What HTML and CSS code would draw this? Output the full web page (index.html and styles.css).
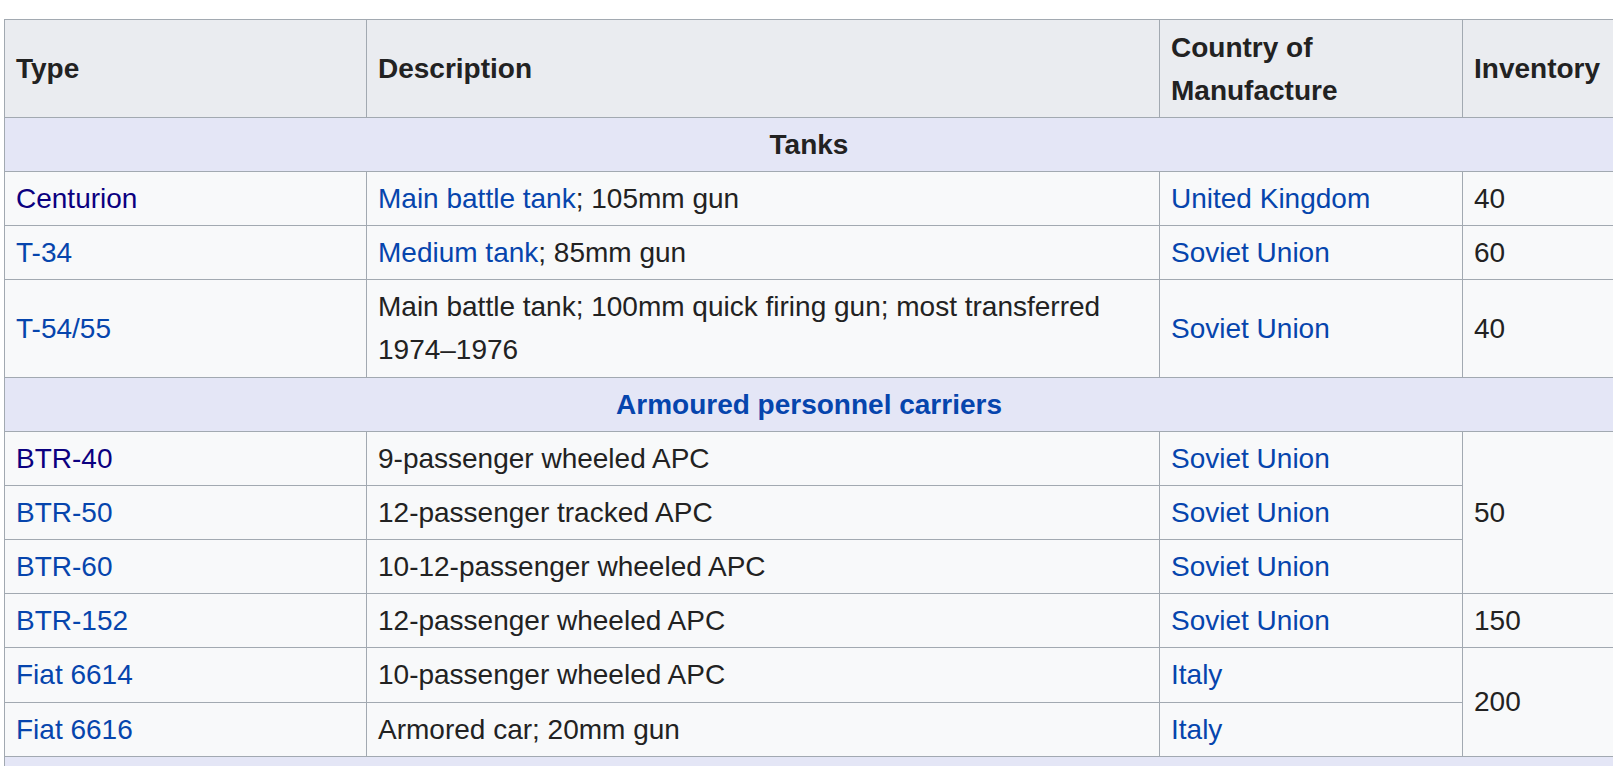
FILE: index.html
```html
<!DOCTYPE html>
<html lang="en">
<head>
<meta charset="utf-8">
<title>Armoured vehicles</title>
<link rel="stylesheet" href="styles.css">
</head>
<body>
<table class="wikitable">
  <colgroup>
    <col class="c-type">
    <col class="c-desc">
    <col class="c-country">
    <col class="c-inv">
  </colgroup>
  <thead>
    <tr>
      <th>Type</th>
      <th>Description</th>
      <th>Country of Manufacture</th>
      <th>Inventory</th>
    </tr>
  </thead>
  <tbody>
    <tr class="section"><th colspan="4">Tanks</th></tr>
    <tr>
      <td><a class="visited" href="#">Centurion</a></td>
      <td><a href="#">Main battle tank</a>; 105mm gun</td>
      <td><a href="#">United Kingdom</a></td>
      <td>40</td>
    </tr>
    <tr>
      <td><a href="#">T-34</a></td>
      <td><a href="#">Medium tank</a>; 85mm gun</td>
      <td><a href="#">Soviet Union</a></td>
      <td>60</td>
    </tr>
    <tr>
      <td><a href="#">T-54/55</a></td>
      <td>Main battle tank; 100mm quick firing gun; most transferred 1974–1976</td>
      <td><a href="#">Soviet Union</a></td>
      <td>40</td>
    </tr>
    <tr class="section"><th colspan="4"><a href="#">Armoured personnel carriers</a></th></tr>
    <tr>
      <td><a class="visited" href="#">BTR-40</a></td>
      <td>9-passenger wheeled APC</td>
      <td><a href="#">Soviet Union</a></td>
      <td rowspan="3">50</td>
    </tr>
    <tr>
      <td><a href="#">BTR-50</a></td>
      <td>12-passenger tracked APC</td>
      <td><a href="#">Soviet Union</a></td>
    </tr>
    <tr>
      <td><a href="#">BTR-60</a></td>
      <td>10-12-passenger wheeled APC</td>
      <td><a href="#">Soviet Union</a></td>
    </tr>
    <tr>
      <td><a href="#">BTR-152</a></td>
      <td>12-passenger wheeled APC</td>
      <td><a href="#">Soviet Union</a></td>
      <td>150</td>
    </tr>
    <tr>
      <td><a href="#">Fiat 6614</a></td>
      <td>10-passenger wheeled APC</td>
      <td><a href="#">Italy</a></td>
      <td rowspan="2">200</td>
    </tr>
    <tr>
      <td><a href="#">Fiat 6616</a></td>
      <td>Armored car; 20mm gun</td>
      <td><a href="#">Italy</a></td>
    </tr>
    <tr class="section"><th colspan="4">&nbsp;</th></tr>
  </tbody>
</table>
</body>
</html>
```
FILE: styles.css
```css
html, body {
  background: #ffffff;
}
body {
  margin: 19px 5px 0 4px;
  font-family: "Liberation Sans", Arial, Helvetica, sans-serif;
  font-size: 28px;
  color: #222222;
}
.wikitable {
  border-collapse: collapse;
  table-layout: fixed;
  width: 1609px;
  background: #f8f9fa;
  color: #222222;
  border: 1px solid #a2a9b1;
}
.c-type { width: 362px; }
.c-desc { width: 793px; }
.c-country { width: 303px; }
.c-inv { width: 151px; }

.wikitable th,
.wikitable td {
  border: 1px solid #a2a9b1;
  padding: 5px 11px;
  line-height: 43.15px;
  vertical-align: middle;
  text-align: left;
}
.wikitable thead th {
  background: #eaecf0;
  font-weight: bold;
  padding-top: 5.5px;
}
.wikitable .section th {
  background: #e4e6f6;
  text-align: center;
  font-weight: bold;
}
a {
  color: #0645ad;
  text-decoration: none;
}
a.visited {
  color: #0b0080;
}
```
